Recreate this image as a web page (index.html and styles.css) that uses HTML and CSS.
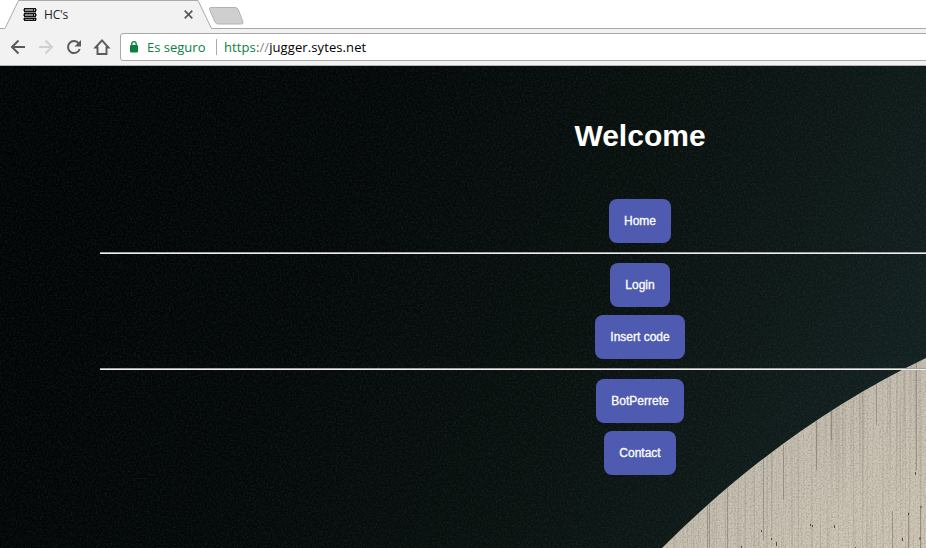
FILE: index.html
```html
<!DOCTYPE html>
<html lang="es">
<head>
<meta charset="utf-8">
<title>HC's</title>
<link rel="stylesheet" href="styles.css">
</head>
<body>
<header class="chrome">
  <div class="tabs">
    <svg class="tab-shape" width="926" height="29" viewBox="0 0 926 29" aria-hidden="true">
      <path class="tab-fill" d="M0 28.5H5L18.5 .5H198L211.500 28.500H926V30H0Z"/>
      <path class="tab-line" d="M0 28.5H5L18.5 .5H198L211.500 28.500H926"/>
      <path class="new-tab" d="M211 7.500H235Q237 7.500 238 9L243 22Q243.500 24 241.500 24H218Q216 24 215 22L209.500 9.500Q209 7.500 211 7.500Z"/>
    </svg>
    <div class="tab">
      <svg class="favicon" width="14" height="13" viewBox="0 0 14 13" shape-rendering="crispEdges" aria-hidden="true">
        <path fill="#8a8a8a" d="M0 1H14V3H0ZM0 6H14V8H0ZM0 10H14V12H0ZM1 3H13V10H1Z"/>
        <path fill="#111" d="M1 0H13V1H1ZM1 3H13V4H1ZM1 5H13V6H1ZM1 8H13V9H1ZM1 10H13V11H1ZM1 12H13V13H1ZM1 1H2V3H1ZM1 6H2V8H1ZM1 11H2V12H1ZM10 1H13V3H10ZM10 6H13V8H10ZM10 11H13V12H10Z"/>
        <path fill="#aaa" d="M11 1H12V3H11ZM11 6H12V8H11ZM11 11H12V12H11Z"/>
      </svg>
      <span class="tab-title">HC's</span>
      <svg class="close" width="9" height="9" viewBox="0 0 9 9" aria-hidden="true"><path d="M.7.7L8.300 8.300M8.300.7L.7 8.300"/></svg>
    </div>
  </div>
  <div class="toolbar">
    <svg class="nav-icons" width="120" height="37" viewBox="0 29 120 37" aria-hidden="true">
      <path class="stroke" d="M25 47H12.500M18.500 40.500L12 47L18.500 53.500"/>
      <path class="stroke disabled" d="M39 47H51.500M45.500 40.500L52 47L45.500 53.500"/>
      <path class="stroke" d="M78.700 43.300A6 6 0 1 0 79.700 49"/>
      <path fill="#5a5a5a" d="M81 40V46.500H74.500Z"/>
      <path class="stroke home" d="M95.500 47.500L102 40.400L108.500 47.500H106.500V54H97.500V47.500Z"/>
    </svg>
    <div class="address">
      <svg class="lock" width="9" height="12" viewBox="0 0 9 12" aria-hidden="true">
        <path fill="#0b8043" d="M1 4H7Q8 4 8 5V10.500Q8 11.500 7 11.500H1Q0 11.500 0 10.500V5Q0 4 1 4Z"/>
        <path fill="none" stroke="#0b8043" stroke-width="1.300" d="M1.800 5V3A2.200 2.300 0 0 1 6.200 3V5"/>
      </svg>
      <span class="secure">Es seguro</span>
      <span class="divider"></span>
      <span class="url"><span class="scheme">https:</span><span class="slashes">//</span>jugger.sytes.net</span>
    </div>
  </div>
</header>
<main class="page">
  <svg class="backdrop" width="926" height="482" viewBox="0 66 926 482" aria-hidden="true">
    <defs>
      <linearGradient id="night" gradientUnits="userSpaceOnUse" x1="60" y1="150" x2="860" y2="500">
        <stop offset="0" stop-color="#010404"/>
        <stop offset=".3" stop-color="#030707"/>
        <stop offset=".65" stop-color="#09110f"/>
        <stop offset="1" stop-color="#12201f"/>
      </linearGradient>
      <linearGradient id="stone" x1="0" y1="0" x2="1" y2="1">
        <stop offset="0" stop-color="#c3bbb0"/>
        <stop offset=".5" stop-color="#c9c2b4"/>
        <stop offset="1" stop-color="#d2c9b8"/>
      </linearGradient>
      <filter id="grain" x="0" y="0" width="100%" height="100%" color-interpolation-filters="sRGB">
        <feTurbulence type="fractalNoise" baseFrequency=".55" numOctaves="2" seed="4"/>
        <feColorMatrix values="0 0 0 0 .4  0 0 0 0 .5  0 0 0 0 .48  .6 .6 0 0 -.5"/>
      </filter>
      <filter id="streaks" x="0" y="0" width="100%" height="100%" color-interpolation-filters="sRGB">
        <feTurbulence type="fractalNoise" baseFrequency=".45 .004" numOctaves="2" seed="8"/>
        <feColorMatrix values="0 0 0 0 .4  0 0 0 0 .37  0 0 0 0 .34  1 0 0 0 -.48"/>
      </filter>
      <filter id="speckle" x="0" y="0" width="100%" height="100%" color-interpolation-filters="sRGB">
        <feTurbulence type="fractalNoise" baseFrequency=".6" numOctaves="2" seed="2"/>
        <feColorMatrix values="0 0 0 0 .4  0 0 0 0 .38  0 0 0 0 .35  1 0 0 0 -.42"/>
      </filter>
      <clipPath id="disc"><path d="M662 548Q784 426 926 358V548Z"/></clipPath>
    </defs>
    <rect y="66" width="926" height="482" fill="url(#night)"/>
    <rect y="66" width="926" height="482" filter="url(#grain)" opacity=".35"/>
    <g clip-path="url(#disc)">
      <rect x="660" y="356" width="266" height="192" fill="url(#stone)"/>
      <rect x="660" y="356" width="266" height="192" filter="url(#streaks)" opacity=".7"/>
      <rect x="660" y="356" width="266" height="192" filter="url(#speckle)" opacity=".7"/>
      <path class="cracks" d="M763.500 455V540M709.500 500V548M707.500 502V548M783.500 445V500M831.500 405V440M876.500 380V425M892.500 511V548M908.500 512V548M916.500 360V470M920.500 506V548M727.500 487V548M816.500 418V470"/>
      <path class="chips" d="M810.500 524V526M812.500 525V527M834.500 525V528M915.500 472V475M920 537V540M761.500 530V532M771.500 538V540M776.500 542V546M902.500 538V541M741.500 546V548M855.500 547V548M921 506V508M908.500 513V515"/>
    </g>
  </svg>
  <div class="content">
    <h1>Welcome</h1>
    <nav class="menu">
      <a class="button">Home</a>
      <hr>
      <a class="button">Login</a>
      <a class="button">Insert code</a>
      <hr>
      <a class="button">BotPerrete</a>
      <a class="button">Contact</a>
    </nav>
  </div>
</main>
</body>
</html>
```
FILE: styles.css
```css
* { box-sizing: border-box; }
body {
  margin: 0;
  width: 926px;
  height: 548px;
  overflow: hidden;
  font-family: "Liberation Sans", Arial, sans-serif;
}
.chrome {
  height: 66px;
  background: #f2f2f2;
  border-bottom: 1px solid #b5b5b5;
  font-family: "Open Sans", "Noto Sans", sans-serif;
}
.tabs {
  position: relative;
  height: 29px;
  background: #fff;
}
.tab-shape { position: absolute; inset: 0; }
.tab-fill { fill: #f2f2f2; }
.tab-line { fill: none; stroke: #a9a9a9; }
.new-tab { fill: #cfcfcf; stroke: #b3b3b3; }
.tab {
  position: relative;
  display: flex;
  align-items: center;
  width: 193px;
  height: 29px;
  padding-left: 23px;
}
.tab-title { margin-left: 7px; font-size: 12px; letter-spacing: -.2px; color: #222; }
.close { margin-left: auto; fill: none; stroke: #5a5a5a; stroke-width: 1.7; }
.toolbar { display: flex; height: 36px; }
.nav-icons { flex: none; }
.stroke { fill: none; stroke: #5a5a5a; stroke-width: 2; }
.disabled { stroke: #d0d0d0; }
.home { stroke-width: 1.9; }
.address {
  flex: none;
  display: flex;
  align-items: center;
  width: 820px;
  height: 28px;
  margin-top: 4px;
  padding-left: 9px;
  background: #fff;
  border: 1px solid #a9a9a9;
  border-radius: 3px;
  font-size: 13px;
  white-space: nowrap;
}
.secure { width: 59px; margin-left: 8px; color: #0b8043; }
.divider { width: 1px; height: 16px; margin: 0 7px 0 10px; background: #aaa; }
.url { letter-spacing: .1px; }
.scheme { color: #0b8043; }
.slashes { color: #888; }
.page {
  position: relative;
  height: 482px;
  overflow: hidden;
  background: #060b0b;
}
.backdrop { position: absolute; inset: 0; }
.cracks { fill: none; stroke: #5d554c; stroke-opacity: .4; }
.chips { fill: none; stroke: #37332e; stroke-opacity: .8; }
.content {
  position: relative;
  width: 1280px;
  padding: 53px 100px 0;
  text-align: center;
}
h1 {
  margin: 0 0 46px;
  color: #fff;
  font-size: 30px;
  line-height: 34px;
}
.menu { display: flex; flex-direction: column; align-items: center; }
.button {
  height: 44px;
  padding: 0 15px;
  border-radius: 8px;
  background: #4e5bb0;
  color: #fff;
  font-size: 12px;
  line-height: 44px;
  -webkit-text-stroke: .3px #fff;
}
.button + .button { margin-top: 8px; }
hr {
  width: 1080px;
  height: 2px;
  margin: 9px 0;
  border: 0;
  border-top: 1px solid #a3a0a3;
  background: #eee;
}
```
